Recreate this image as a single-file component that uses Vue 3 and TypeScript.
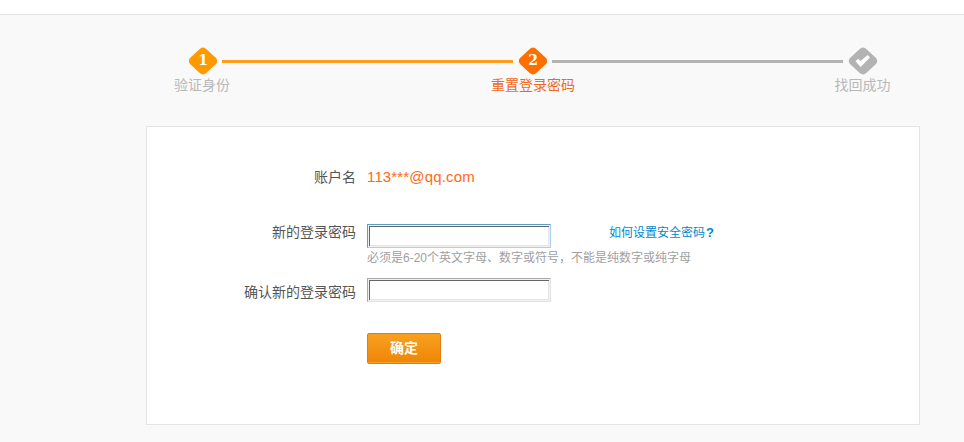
<script setup lang="ts">
const steps = [
  { label: '验证身份', cls: 'done', mark: '1' },
  { label: '重置登录密码', cls: 'current', mark: '2' },
  { label: '找回成功', cls: 'todo', mark: '' },
]
</script>

<template>
  <div class="page">
    <div class="topbar"></div>
    <div class="main">
      <div class="steps">
        <template v-for="(s, i) in steps" :key="s.label">
          <div class="badge" :class="s.cls">
            <svg width="30" height="28" viewBox="0 0 30 28">
              <path class="shape" d="M15 0.5C16.5 0.5 17.6 1.3 18.8 2.4L28 11C29.6 12.6 29.6 15.4 28 17L18.8 25.6C17.6 26.7 16.5 27.5 15 27.5C13.5 27.5 12.4 26.7 11.2 25.6L2 17C0.4 15.4 0.4 12.6 2 11L11.2 2.4C12.4 1.3 13.5 0.5 15 0.5Z" />
              <path v-if="!s.mark" d="M7.5 14.2L10 11.7L12.6 14L19.6 8L22 10.4L12.6 20Z" fill="#fff" />
            </svg>
            <span v-if="s.mark" class="num">{{ s.mark }}</span>
          </div>
          <div v-if="i < 2" class="line" :class="s.cls"></div>
        </template>
        <template v-for="(s, i) in steps" :key="'l' + s.label">
          <div class="step-label" :class="[s.cls, 'c' + i]">{{ s.label }}</div>
        </template>
      </div>

      <div class="card">
        <div class="row account">
          <div class="name">账户名</div>
          <div class="value">113***@qq.com</div>
        </div>
        <div class="row pw">
          <div class="name">新的登录密码</div>
          <input class="field focus" type="password" />
          <a class="help">如何设置安全密码<b>?</b></a>
        </div>
        <div class="hint">必须是6-20个英文字母、数字或符号，不能是纯数字或纯字母</div>
        <div class="row confirm">
          <div class="name">确认新的登录密码</div>
          <input class="field" type="password" />
        </div>
        <button class="ok" type="button">确定</button>
      </div>
    </div>
  </div>
</template>

<style>
html, body { margin: 0; background: #f9f9f9; }
</style>

<style scoped>
.page {
  width: 964px;
  height: 442px;
  overflow: hidden;
  font-family: "Liberation Sans", "Noto Sans CJK SC", sans-serif;
  font-size: 14px;
  color: #555;
}
.topbar {
  height: 14px;
  background: #fff;
  border-bottom: 1px solid #e4e4e4;
}
.main {
  padding: 32px 44px 0 146px;
}
.steps {
  display: grid;
  grid-template-columns: 30px 300px 30px 300px 30px;
  margin-left: 42px;
  width: 690px;
  height: 79px;
  align-content: start;
}
.badge {
  position: relative;
  width: 30px;
  height: 28px;
}
.badge svg { display: block; }
.done .shape { fill: #ff9900; }
.current .shape { fill: #ff6f00; }
.todo .shape { fill: #b3b3b3; }
.num {
  position: absolute;
  inset: 0;
  text-align: center;
  color: #fff;
  font: bold 14px/27px "DejaVu Serif", serif;
}
.line {
  height: 3px;
  margin: 13px 5px 0 4px;
}
.line.done { background: #ff9d1e; }
.line.current { background: #b4b4b4; }
.step-label {
  grid-row: 2;
  justify-self: center;
  white-space: nowrap;
  line-height: 20px;
  color: #b8b8b8;
}
.step-label.current { color: #ee6a24; }
.c0 { grid-column: 1; margin-right: 2px; }
.c1 { grid-column: 3; }
.c2 { grid-column: 5; margin-right: 1px; }
.card {
  box-sizing: border-box;
  width: 774px;
  height: 299px;
  background: #fff;
  border: 1px solid #e4e4e4;
  padding-top: 40px;
}
.row {
  display: flex;
  align-items: flex-start;
}
.name {
  width: 209px;
  margin-right: 11px;
  text-align: right;
  color: #555;
  line-height: 20px;
}
.value {
  color: #ff6a13;
  font-size: 15px;
  letter-spacing: 0.15px;
  line-height: 20px;
}
.pw {
  margin-top: 37px;
}
.pw .name {
  line-height: 16px;
}
.confirm .name {
  line-height: 28px;
}
.field {
  box-sizing: border-box;
  width: 184px;
  height: 24px;
  margin: 0;
  padding: 0;
  background: #fff;
  border: 1px solid;
  border-color: #a8a8a8 #e3e3e3 #e3e3e3 #a8a8a8;
  box-shadow: inset 0 0 0 1px #f1f1f1, inset 2px 2px 0 #666, inset -2px -2px 0 #e6e6e6;
  outline: none;
}
.field.focus {
  border-color: #5b9fc9 #a9d0e8 #a9d0e8 #5b9fc9;
}
.help {
  margin-left: 58px;
  color: #0088cc;
  font-size: 12px;
  line-height: 18px;
  white-space: nowrap;
}
.help b {
  font-size: 13px;
  margin-left: 1px;
}
.hint {
  margin: 1px 0 0 220px;
  font-size: 12px;
  line-height: 18px;
  color: #a0a0a0;
  white-space: nowrap;
}
.confirm {
  margin-top: 11px;
}
.ok {
  display: block;
  box-sizing: border-box;
  width: 74px;
  height: 31px;
  margin: 27px 0 0 220px;
  padding: 0 0 3px;
  border: 1px solid #e07c10;
  border-radius: 2px;
  background: linear-gradient(#f9a11f, #ee8506);
  box-shadow: inset 0 -1px 0 #f6a024;
  color: #fff;
  font-family: inherit;
  font-size: 14px;
  font-weight: bold;
}
</style>
